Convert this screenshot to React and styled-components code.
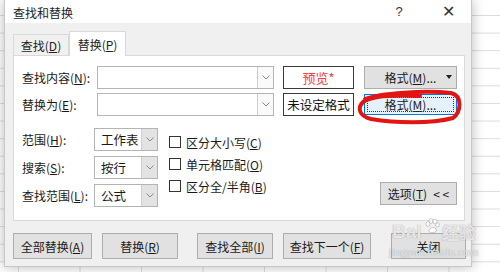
import styled, { createGlobalStyle } from 'styled-components';

const Global = createGlobalStyle`
  html, body {
    margin: 0;
    padding: 0;
  }
  body {
    width: 500px;
    height: 272px;
    overflow: hidden;
    font-family: 'Noto Sans CJK SC', 'Noto Sans', sans-serif;
    font-size: 12px;
    color: #1a1a1a;
  }
  u {
    text-underline-offset: 1px;
  }
`;

const Sheet = styled.div`
  width: 500px;
  height: 272px;
  padding-left: 4px;
  box-sizing: border-box;
  background-color: #fff;
  background-image:
    linear-gradient(to bottom, #dcdcdc 1px, transparent 1px),
    linear-gradient(to right, #dcdcdc 1px, transparent 1px);
  background-size: 100% 17.6px, 61.5px 100%;
  background-position: 0 15px, 18px 0;
`;

const Dialog = styled.div`
  position: relative;
  width: 468px;
  height: 267px;
  background: #f0f0f0;
  border: 1px solid #c8c8c8;
  border-top: none;
  box-sizing: border-box;
  box-shadow: 0 0 12px rgba(0, 0, 0, 0.28);
  display: flex;
  flex-direction: column;
`;

const TitleBar = styled.div`
  height: 23px;
  background: #fff;
  display: flex;
  align-items: center;
  padding-left: 8px;
  padding-right: 8px;
  font-size: 12px;
  color: #222;
`;

const TitleText = styled.span`
  flex: 1;
  padding-top: 1px;
`;

const TitleIcon = styled.span`
  width: ${(p) => p.$w}px;
  margin-right: ${(p) => p.$mr || 0}px;
  text-align: center;
  font-family: 'Liberation Sans', sans-serif;
  font-size: ${(p) => p.$size}px;
  color: #333;
`;

const Tabs = styled.div`
  display: flex;
  align-items: flex-end;
  margin-top: 8px;
  padding-left: 8px;
  height: 24px;
`;

const Tab = styled.div`
  height: ${(p) => (p.$active ? 25 : 21)}px;
  width: ${(p) => p.$w}px;
  box-sizing: border-box;
  background: ${(p) => (p.$active ? '#fff' : '#f0f0f0')};
  border: 1px solid #d9d9d9;
  border-bottom: none;
  margin-bottom: ${(p) => (p.$active ? -1 : 0)}px;
  display: flex;
  align-items: center;
  justify-content: center;
  position: relative;
  z-index: 1;
  color: #222;
`;

const Panel = styled.div`
  margin-left: 8px;
  width: 452px;
  height: 166px;
  box-sizing: border-box;
  background: #fff;
  border: 1px solid #d9d9d9;
  padding: 10px 6px 0 8px;
  display: flex;
  flex-direction: column;
`;

const Row = styled.div`
  display: flex;
  align-items: center;
  height: 23px;
  margin-bottom: 4px;
`;

const Label = styled.span`
  width: ${(p) => p.$w}px;
  flex-shrink: 0;
  white-space: nowrap;
`;

const Combo = styled.div`
  width: ${(p) => p.$w}px;
  height: ${(p) => p.$h || 23}px;
  box-sizing: border-box;
  border: 1px solid #b4b4b4;
  background: #fff;
  display: flex;
  flex-shrink: 0;
`;

const ComboText = styled.span`
  flex: 1;
  padding-left: 6px;
  display: flex;
  align-items: center;
  font-size: 12.5px;
`;

const ComboButton = styled.div`
  width: 15px;
  background: ${(p) => (p.$grey ? '#e3e3e3' : '#fafafa')};
  border-left: 1px solid #cfcfcf;
  display: flex;
  align-items: center;
  justify-content: center;
`;

const Preview = styled.div`
  width: 71px;
  height: 23px;
  box-sizing: border-box;
  border: 1px solid #3a3a3a;
  margin-left: 9px;
  display: flex;
  align-items: center;
  justify-content: center;
  font-size: ${(p) => (p.$red ? 13 : 12.5)}px;
  color: ${(p) => (p.$red ? '#f23d3d' : '#111')};
  flex-shrink: 0;
`;

const Button = styled.div`
  width: ${(p) => p.$w}px;
  height: ${(p) => p.$h || 23}px;
  margin-left: ${(p) => p.$ml || 0}px;
  box-sizing: border-box;
  background: ${(p) => (p.$focus ? '#e5f1fb' : '#e1e1e1')};
  border: 1px solid ${(p) => (p.$focus ? '#0078d7' : '#adadad')};
  display: flex;
  align-items: center;
  justify-content: center;
  position: relative;
  flex-shrink: 0;
  color: #1a1a1a;
`;

const FocusRing = styled.div`
  position: absolute;
  inset: 2px;
  border: 1px dotted #333;
`;

const Caret = styled.span`
  position: absolute;
  right: 4px;
  top: 8px;
  width: 0;
  height: 0;
  border-left: 3px solid transparent;
  border-right: 3px solid transparent;
  border-top: 4px solid #222;
`;

const Options = styled.div`
  display: flex;
  margin-top: 8px;
`;

const SelectColumn = styled.div`
  display: flex;
  flex-direction: column;
  gap: 5px;
`;

const SelectRow = styled.div`
  display: flex;
  align-items: center;
`;

const CheckColumn = styled.div`
  display: flex;
  flex-direction: column;
  margin-left: 11px;
  padding-top: 3px;
`;

const CheckRow = styled.label`
  display: flex;
  align-items: center;
  height: 22px;
  gap: 5px;
`;

const Box = styled.span`
  width: 10px;
  height: 10px;
  border: 1px solid #333;
  background: #fff;
`;

const OptionsButton = styled(Button)`
  margin-left: auto;
  align-self: flex-end;
  margin-bottom: 2px;
  margin-right: 1px;
  gap: 6px;
`;

const Footer = styled.div`
  display: flex;
  padding-left: 8px;
  margin-top: 12px;
`;

const Scribble = styled.svg`
  position: absolute;
  left: 0;
  top: 0;
  pointer-events: none;
`;

const Watermark = styled.div`
  position: absolute;
  left: 384px;
  top: 218px;
  display: flex;
  flex-direction: column;
  align-items: center;
  color: rgba(255, 255, 255, 0.8);
  text-shadow: 0 0 1px rgba(110, 110, 110, 0.8);
  pointer-events: none;
  line-height: 1;
`;

const MarkTop = styled.div`
  display: flex;
  align-items: center;
  font-family: 'Liberation Sans', sans-serif;
  font-size: 19px;
  font-weight: bold;
  gap: 2px;
`;

const MarkCjk = styled.span`
  font-family: 'Noto Sans CJK SC', sans-serif;
  font-size: 17px;
`;

const MarkBottom = styled.div`
  font-family: 'Liberation Sans', sans-serif;
  font-size: 10.5px;
  margin-top: 3px;
  letter-spacing: 0.3px;
`;

const Chevron = () => (
  <svg width="8" height="5" viewBox="0 0 8 5">
    <polyline points="0.5,0.5 4,4 7.5,0.5" fill="none" stroke="#8a8a8a" strokeWidth="1" />
  </svg>
);

const Paw = () => (
  <svg width="16" height="16" viewBox="0 0 16 16" style={{ marginBottom: 10 }}>
    <g fill="rgba(255,255,255,0.85)" stroke="rgba(120,120,120,0.6)" strokeWidth="0.6">
      <ellipse cx="4" cy="6" rx="2" ry="2.4" />
      <ellipse cx="7" cy="3" rx="2" ry="2.4" />
      <ellipse cx="11" cy="3.5" rx="2" ry="2.4" />
      <ellipse cx="13.5" cy="7" rx="1.8" ry="2.2" />
      <path d="M5 13 C 5 9, 12 8, 12.5 12.5 C 12.5 15, 5 15.5, 5 13 Z" />
    </g>
  </svg>
);

const Select = ({ value }) => (
  <Combo $w={64}>
    <ComboText>{value}</ComboText>
    <ComboButton $grey>
      <Chevron />
    </ComboButton>
  </Combo>
);

const selects = [
  { label: '范围', key: 'H', value: '工作表' },
  { label: '搜索', key: 'S', value: '按行' },
  { label: '查找范围', key: 'L', value: '公式' },
];

const checks = [
  { label: '区分大小写', key: 'C' },
  { label: '单元格匹配', key: 'O' },
  { label: '区分全/半角', key: 'B' },
];

const App = () => (
  <>
    <Global />
    <Sheet>
      <Dialog>
        <TitleBar>
          <TitleText>查找和替换</TitleText>
          <TitleIcon $w={20} $size={13} $mr={24}>?</TitleIcon>
          <TitleIcon $w={30} $size={16}>✕</TitleIcon>
        </TitleBar>

        <Tabs>
          <Tab $w={56}>
            查找(<u>D</u>)
          </Tab>
          <Tab $w={57} $active>
            替换(<u>P</u>)
          </Tab>
        </Tabs>

        <Panel>
          <Row>
            <Label $w={75}>
              查找内容(<u>N</u>):
            </Label>
            <Combo $w={177}>
              <ComboText />
              <ComboButton>
                <Chevron />
              </ComboButton>
            </Combo>
            <Preview $red>预览*</Preview>
            <Button $w={93} $ml={10}>
              格式(<u>M</u>)...
              <Caret />
            </Button>
          </Row>
          <Row>
            <Label $w={75}>
              替换为(<u>E</u>):
            </Label>
            <Combo $w={177}>
              <ComboText />
              <ComboButton>
                <Chevron />
              </ComboButton>
            </Combo>
            <Preview>未设定格式</Preview>
            <Button $w={93} $ml={10} $h={21} $focus>
              <FocusRing />
              格式(<u>M</u>)...
            </Button>
          </Row>

          <Options>
            <SelectColumn>
              {selects.map((s) => (
                <SelectRow key={s.key}>
                  <Label $w={72}>
                    {s.label}(<u>{s.key}</u>):
                  </Label>
                  <Select value={s.value} />
                </SelectRow>
              ))}
            </SelectColumn>
            <CheckColumn>
              {checks.map((c) => (
                <CheckRow key={c.key}>
                  <Box />
                  <span>
                    {c.label}(<u>{c.key}</u>)
                  </span>
                </CheckRow>
              ))}
            </CheckColumn>
            <OptionsButton $w={77}>
              <span>
                选项(<u>T</u>)
              </span>
              <span>{'< <'}</span>
            </OptionsButton>
          </Options>
        </Panel>

        <Footer>
          <Button $w={79} $h={26}>
            全部替换(<u>A</u>)
          </Button>
          <Button $w={76} $h={26} $ml={10}>
            替换(<u>R</u>)
          </Button>
          <Button $w={76} $h={26} $ml={19}>
            查找全部(<u>I</u>)
          </Button>
          <Button $w={88} $h={26} $ml={10}>
            查找下一个(<u>F</u>)
          </Button>
          <Button $w={75} $h={26} $ml={20}>
            关闭
          </Button>
        </Footer>

        <Scribble width="468" height="267" viewBox="0 0 468 267">
          <path
            d="M360 99 C 375 93, 420 90, 446 93 C 458 96, 456 112, 448 118 C 425 124, 390 123, 366 119 C 354 116, 352 108, 358 102 C 368 95, 395 95, 415 96"
            fill="none"
            stroke="#e31414"
            strokeWidth="4"
            strokeLinecap="round"
          />
        </Scribble>

        <Watermark>
          <MarkTop>
            <span>Bai</span>
            <Paw />
            <MarkCjk>经验</MarkCjk>
          </MarkTop>
          <MarkBottom>jingyan.baidu.com</MarkBottom>
        </Watermark>
      </Dialog>
    </Sheet>
  </>
);

export default App;
